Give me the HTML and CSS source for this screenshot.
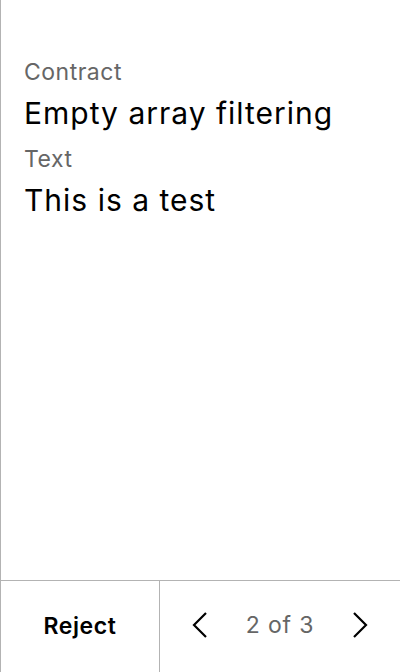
FILE: index.html
```html
<!DOCTYPE html>
<html lang="en">
<head>
<meta charset="utf-8">
<link rel="stylesheet" href="styles.css">
</head>
<body>
<div class="screen">
  <main class="content">
    <div class="label">Contract</div>
    <div class="value">Empty array filtering</div>
    <div class="label">Text</div>
    <div class="value">This is a test</div>
  </main>
  <footer class="bar">
    <button class="reject">Reject</button>
    <div class="pager">
      <button class="nav" aria-label="Previous">
        <svg width="16" height="26" viewBox="0 0 16 26"><path d="M14 1 L2 13 L14 25" fill="none" stroke="#000" stroke-width="2.2"/></svg>
      </button>
      <span class="count">2 of 3</span>
      <button class="nav" aria-label="Next">
        <svg width="16" height="26" viewBox="0 0 16 26"><path d="M2 1 L14 13 L2 25" fill="none" stroke="#000" stroke-width="2.2"/></svg>
      </button>
    </div>
  </footer>
</div>
</body>
</html>
```
FILE: styles.css
```css
* { box-sizing: border-box; }
html, body { margin: 0; padding: 0; background: #fff; }
body { font-family: Inter, "Noto Sans", sans-serif; color: #000; }
.screen {
  height: 672px;
  display: flex;
  flex-direction: column;
  border-left: 1px solid #b3b3b3;
}
.content {
  flex: 1;
  padding: 56px 23px 0;
}
.label {
  font-size: 23px;
  line-height: 32px;
  letter-spacing: 0.5px;
  color: #666;
}
.value {
  font-size: 30px;
  line-height: 50px;
  letter-spacing: 1px;
  margin-bottom: 5px;
}
.bar {
  height: 92px;
  border-top: 1px solid #b3b3b3;
  display: grid;
  grid-template-columns: 159px 1fr;
}
button {
  font-family: inherit;
  background: none;
  border: 0;
  padding: 0;
  cursor: pointer;
  color: #000;
}
.reject {
  font-size: 23px;
  font-weight: 600;
  letter-spacing: 0.6px;
  border-right: 1px solid #b3b3b3;
  padding-bottom: 2px;
}
.pager {
  display: flex;
  align-items: center;
  justify-content: space-between;
  padding: 0 32px 3px;
}
.nav { display: flex; align-items: center; justify-content: center; width: 16px; height: 26px; }
.count { font-size: 23px; letter-spacing: 0.8px; color: #666; }
```
